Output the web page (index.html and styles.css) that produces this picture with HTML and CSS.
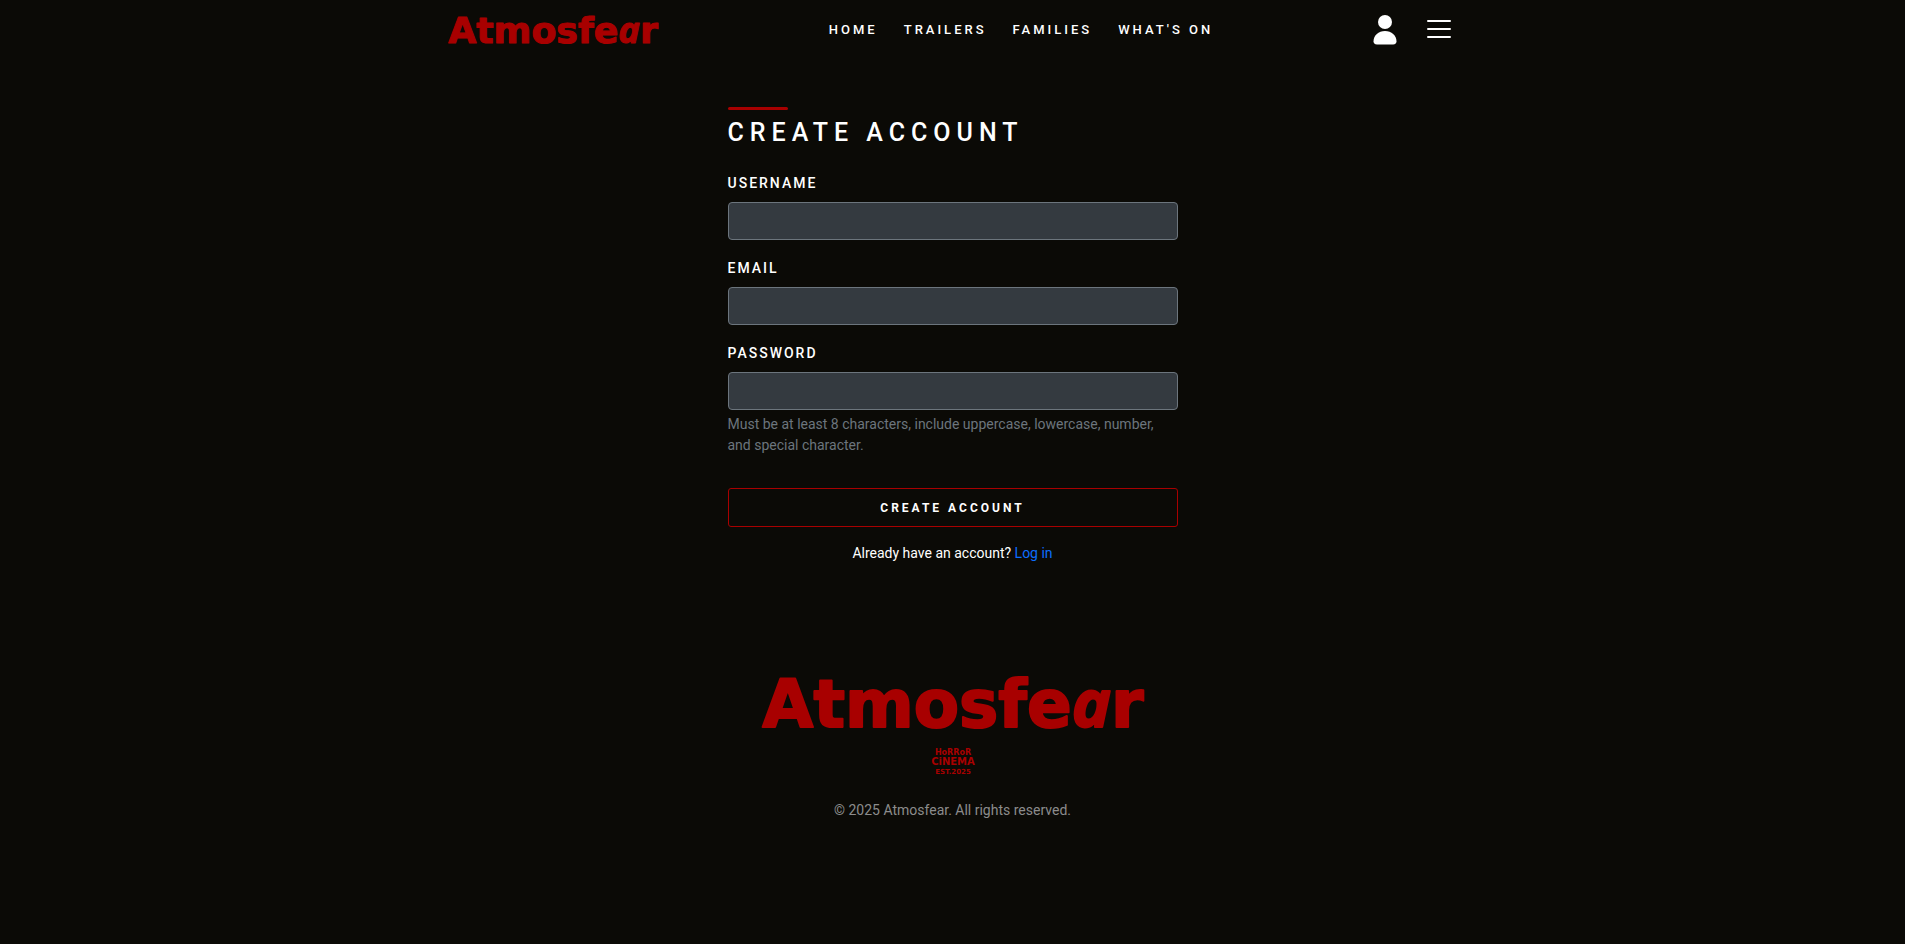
FILE: index.html
```html
<!DOCTYPE html>
<html lang="en">
<head>
    <meta charset="UTF-8">
    <meta name="viewport" content="width=device-width, initial-scale=1.0">
    <title>Create Account - Atmosfear</title>
    <link rel="stylesheet" href="styles.css">
</head>
<body>
    <header>
        <div class="navbar">
            <a href="#" class="logo" aria-label="Atmosfear home">
                <svg class="wordmark" viewBox="0 0 400 90">
                    <text x="200" y="70">Atmosfe<tspan class="round-a">a</tspan>r</text>
                </svg>
            </a>
            <nav class="nav-links">
                <a href="#">Home</a>
                <a href="#">Trailers</a>
                <a href="#">Families</a>
                <a href="#">What's On</a>
            </nav>
            <div class="nav-icons">
                <a href="#" aria-label="Account">
                    <svg width="24" height="32" viewBox="0 0 24 32" fill="#fff">
                        <circle cx="12" cy="9" r="7"/>
                        <path d="M4 31.500C1.500 31.500.500 30 .500 28.500C.500 22.500 5.500 18 12 18S23.500 22.500 23.500 28.500C23.500 30 22.500 31.500 20 31.500Z"/>
                    </svg>
                </a>
                <button type="button" class="menu-toggle" aria-label="Menu">
                    <svg width="32" height="32" viewBox="0 0 32 32" stroke="#fff" stroke-width="2" stroke-linecap="round">
                        <path d="M5 8H27M5 16H27M5 24H27"/>
                    </svg>
                </button>
            </div>
        </div>
    </header>

    <main>
        <h1>Create Account</h1>
        <form>
            <div class="field">
                <label for="username">Username</label>
                <input type="text" id="username" name="username">
            </div>
            <div class="field">
                <label for="email">Email</label>
                <input type="email" id="email" name="email">
            </div>
            <div class="field">
                <label for="password">Password</label>
                <input type="password" id="password" name="password" aria-describedby="password-help">
                <p class="help" id="password-help">Must be at least 8 characters, include uppercase, lowercase, number, and special character.</p>
            </div>
            <button type="submit" class="btn-submit">Create Account</button>
        </form>
        <p class="login">Already have an account? <a href="#">Log in</a></p>
    </main>

    <footer>
        <svg class="wordmark" viewBox="0 0 400 90">
            <text x="200" y="70">Atmosfe<tspan class="round-a">a</tspan>r</text>
        </svg>
        <svg class="stamp" viewBox="0 0 48 30">
            <text x="24" y="8" font-size="8">HoRRoR</text>
            <text x="24" y="18" font-size="10">CiNEMA</text>
            <text x="24" y="27" font-size="7">EST.2025</text>
        </svg>
        <p>© 2025 Atmosfear. All rights reserved.</p>
    </footer>
</body>
</html>
```
FILE: styles.css
```css
* {
    box-sizing: border-box;
}
body {
    font-family: Roboto, Arial, sans-serif;
    font-size: 14px;
    line-height: 21px;
    margin: 0;
    background-color: #0b0a06;
    color: #fff;
}
a {
    text-decoration: none;
}
svg {
    display: block;
    overflow: visible;
}
.navbar {
    max-width: 1020px;
    height: 58px;
    margin: 0 auto;
    padding-right: 7px;
    display: flex;
    align-items: center;
    justify-content: space-between;
}
.wordmark {
    width: 400px;
    max-width: 100%;
    fill: #a80000;
    stroke: #a80000;
    stroke-width: 2;
    stroke-linejoin: round;
    font-family: "DejaVu Sans", sans-serif;
    font-size: 66px;
    font-weight: bold;
    text-anchor: middle;
}
.round-a {
    font-family: "Open Sans", sans-serif;
    font-style: italic;
}
.logo {
    width: 226px;
}
.logo .wordmark {
    width: 220px;
}
.nav-links {
    display: flex;
    gap: 26px;
}
.nav-links a {
    color: #fff;
    font-size: 13px;
    font-weight: 500;
    letter-spacing: 3px;
    text-transform: uppercase;
}
.nav-icons {
    display: flex;
    align-items: center;
    gap: 26px;
}
.menu-toggle {
    background: none;
    border: none;
    padding: 0;
    cursor: pointer;
}
main {
    max-width: 450px;
    margin: 49px auto 0;
}
h1 {
    margin: 0 0 26px;
    font-size: 25px;
    line-height: 29px;
    font-weight: 500;
    letter-spacing: 6px;
    text-transform: uppercase;
}
h1::before {
    content: "";
    display: block;
    width: 60px;
    height: 3px;
    margin-bottom: 8px;
    background-color: #a80000;
    border-radius: 2px;
}
.field {
    margin-bottom: 18px;
}
.field label {
    display: block;
    margin-bottom: 8px;
    font-weight: 500;
    letter-spacing: 2px;
    text-transform: uppercase;
}
.field input {
    display: block;
    width: 100%;
    height: 38px;
    padding: 6px 12px;
    font: inherit;
    color: #fff;
    background-color: #343a40;
    border: 1px solid #6c757d;
    border-radius: 4px;
}
.help {
    margin: 4px 0 0;
    color: #6c757d;
}
.btn-submit {
    display: block;
    width: 100%;
    height: 39px;
    margin-top: 32px;
    font-family: inherit;
    font-size: 12px;
    font-weight: 700;
    letter-spacing: 3px;
    text-transform: uppercase;
    color: #fff;
    background: transparent;
    border: 1px solid #a80000;
    border-radius: 3px;
    cursor: pointer;
}
.login {
    margin: 16px 0 0;
    text-align: center;
}
.login a {
    color: #0d6efd;
}
footer {
    margin-top: 93px;
    padding-bottom: 100px;
    display: flex;
    flex-direction: column;
    align-items: center;
}
.stamp {
    width: 48px;
    fill: #a80000;
    font-family: "DejaVu Sans", sans-serif;
    font-weight: bold;
    text-anchor: middle;
}
footer p {
    margin: 23px 0 0;
    color: #8c8c8c;
}
```
